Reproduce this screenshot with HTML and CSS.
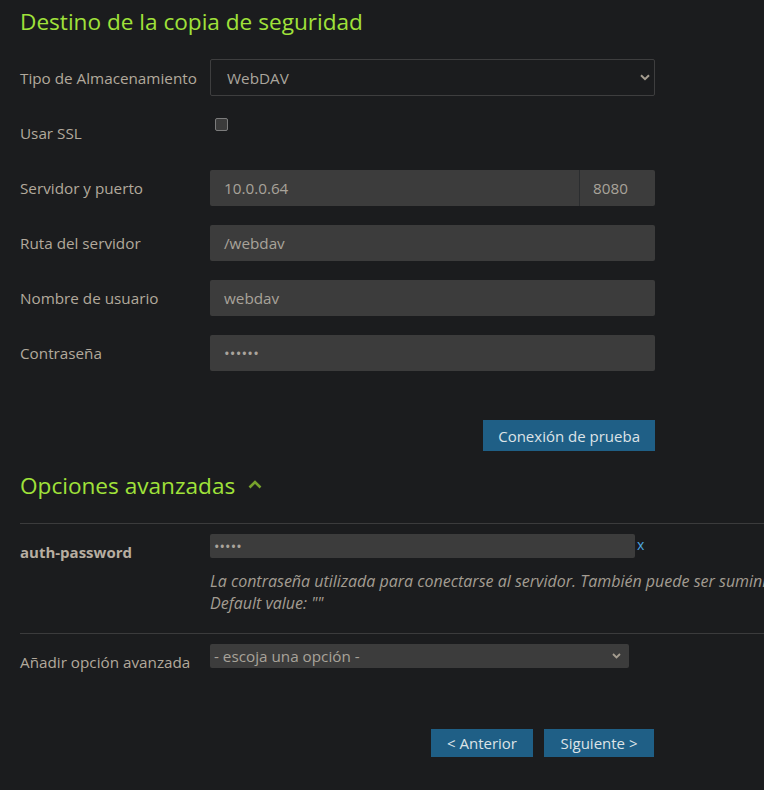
FILE: index.html
```html
<!DOCTYPE html>
<html lang="es">
<head>
<meta charset="utf-8">
<title>Destino de la copia de seguridad</title>
<link rel="stylesheet" href="styles.css">
</head>
<body>
<div class="page">
  <h1 class="title">Destino de la copia de seguridad</h1>

  <div class="form">
    <div class="row">
      <div class="label">Tipo de Almacenamiento</div>
      <div class="ctl">
        <div class="select">
          <span>WebDAV</span>
          <svg class="chev" width="10" height="7" viewBox="0 0 10 7"><path d="M1 1.2 L5 5.2 L9 1.2" fill="none" stroke="#a59d90" stroke-width="2"/></svg>
        </div>
      </div>
    </div>

    <div class="row">
      <div class="label">Usar SSL</div>
      <div class="ctl ctl-top"><span class="checkbox"></span></div>
    </div>

    <div class="row">
      <div class="label">Servidor y puerto</div>
      <div class="ctl split">
        <div class="input grow">10.0.0.64</div>
        <div class="input port">8080</div>
      </div>
    </div>

    <div class="row">
      <div class="label">Ruta del servidor</div>
      <div class="ctl"><div class="input">/webdav</div></div>
    </div>

    <div class="row">
      <div class="label">Nombre de usuario</div>
      <div class="ctl"><div class="input">webdav</div></div>
    </div>

    <div class="row">
      <div class="label">Contraseña</div>
      <div class="ctl"><div class="input dots">••••••</div></div>
    </div>

    <div class="actions">
      <button class="btn">Conexión de prueba</button>
    </div>
  </div>

  <h2 class="subtitle">Opciones avanzadas
    <svg class="up" width="14" height="9" viewBox="0 0 14 9"><path d="M1.5 7.5 L7 2 L12.5 7.5" fill="none" stroke="#77a22c" stroke-width="2.6"/></svg>
  </h2>

  <div class="adv">
    <div class="adv-row">
      <div class="adv-label bold">auth-password</div>
      <div class="adv-ctl">
        <div class="adv-line">
          <div class="small-input dots-sm">•••••</div>
          <a class="remove">x</a>
        </div>
        <div class="help">
          <div>La contraseña utilizada para conectarse al servidor. También puede ser suministrada mediante la variable de entorno AUTH_PASSWORD.</div>
          <div>Default value: ""</div>
        </div>
      </div>
    </div>
    <div class="adv-row last">
      <div class="adv-label">Añadir opción avanzada</div>
      <div class="adv-ctl">
        <div class="small-select">
          <span>- escoja una opción -</span>
          <svg class="chev" width="9" height="6" viewBox="0 0 9 6"><path d="M1 1 L4.5 4.5 L8 1" fill="none" stroke="#a59d90" stroke-width="1.8"/></svg>
        </div>
      </div>
    </div>
  </div>

  <div class="nav">
    <button class="btn nav-btn">&lt; Anterior</button>
    <button class="btn nav-btn next">Siguiente &gt;</button>
  </div>
</div>
</body>
</html>
```

FILE: styles.css
```css
html, body {
  margin: 0;
  padding: 0;
  background: #1b1c1e;
  overflow: hidden;
}
body {
  font-family: "Open Sans", "Noto Sans", sans-serif;
  color: #b2a99c;
  font-size: 15.25px;
}
.page {
  padding: 7px 0 0 20px;
  width: 1000px;
}
.title, .subtitle {
  margin: 0;
  font-size: 22.6px;
  line-height: 30px;
  font-weight: 400;
  color: #a0e23a;
}
.form {
  margin-top: 22px;
  width: 635px;
  display: flex;
  flex-direction: column;
  gap: 19px;
}
.row {
  display: flex;
  align-items: center;
  min-height: 36px;
}
.label {
  width: 190px;
  flex: none;
  line-height: 20px;
}
.ctl {
  flex: 1;
  display: flex;
}
.ctl-top {
  align-self: flex-start;
  padding-top: 3px;
}
.select {
  flex: 1;
  height: 37px;
  box-sizing: border-box;
  border: 1px solid #3e3e3f;
  border-radius: 2px;
  display: flex;
  align-items: center;
  justify-content: space-between;
  padding: 0 4px 0 16px;
  color: #aaa59d;
}
.checkbox {
  display: block;
  width: 13px;
  height: 13px;
  box-sizing: border-box;
  border: 1px solid #7c7c7c;
  background: #3b3b3b;
  border-radius: 2px;
  margin-left: 5px;
}
.input {
  flex: 1;
  height: 36px;
  box-sizing: border-box;
  background: #3c3c3c;
  border-radius: 2px;
  padding: 0 14px;
  display: flex;
  align-items: center;
  color: #a8a39a;
}
.split .grow {
  border-radius: 2px 0 0 2px;
}
.split .port {
  flex: none;
  width: 76px;
  border-left: 1px solid #2b2d2f;
  border-radius: 0 2px 2px 0;
  padding-left: 13px;
}
.dots {
  font-size: 15px;
  letter-spacing: 0.2px;
  color: #aaa49c;
}
.actions {
  margin-top: 30px;
  display: flex;
  justify-content: flex-end;
}
.btn {
  font-family: "Open Sans", "Noto Sans", sans-serif;
  font-size: 15px;
  background: #1f5f86;
  color: #dde3e7;
  border: none;
  border-radius: 0;
  height: 31px;
  padding: 0 15px;
  cursor: pointer;
}
.subtitle {
  margin-top: 20px;
  display: flex;
  align-items: center;
  gap: 13px;
}
.up {
  margin-top: -3px;
}
.adv {
  margin-top: 22px;
  width: 744px;
}
.adv-row {
  display: flex;
  border-top: 1px solid #3b3b3c;
  padding: 10px 0 19px;
}
.adv-row.last {
  padding-bottom: 0;
}
.adv-label {
  width: 190px;
  flex: none;
  padding-top: 8px;
  line-height: 20px;
  white-space: nowrap;
}
.bold {
  font-weight: 700;
  font-size: 15px;
  color: #b7aea1;
}
.adv-ctl {
  flex: 1;
  min-width: 0;
}
.adv-line {
  display: flex;
  align-items: center;
}
.small-input {
  width: 425px;
  height: 24px;
  box-sizing: border-box;
  background: #3c3c3c;
  border-radius: 2px;
  padding: 0 4px;
  display: flex;
  align-items: center;
}
.dots-sm {
  font-size: 14.5px;
  letter-spacing: 0.1px;
  color: #aaa49c;
}
.remove {
  color: #4da6e2;
  font-size: 14px;
  margin-left: 2px;
  margin-top: -2px;
  line-height: 20px;
}
.help {
  margin-top: 12px;
  font-style: italic;
  font-size: 16px;
  line-height: 22px;
  color: #a39c92;
  white-space: nowrap;
}
.small-select {
  width: 419px;
  height: 24px;
  box-sizing: border-box;
  background: #3c3c3c;
  border-radius: 2px;
  padding: 0 8px 0 4px;
  display: flex;
  align-items: center;
  justify-content: space-between;
  color: #a8a39a;
}
.nav {
  width: 635px;
  margin-top: 57px;
  display: flex;
  justify-content: flex-end;
  gap: 11px;
}
.nav-btn {
  height: 28px;
  padding: 0 16px;
}
.nav-btn.next {
  width: 110px;
  margin-right: 1px;
}
```
